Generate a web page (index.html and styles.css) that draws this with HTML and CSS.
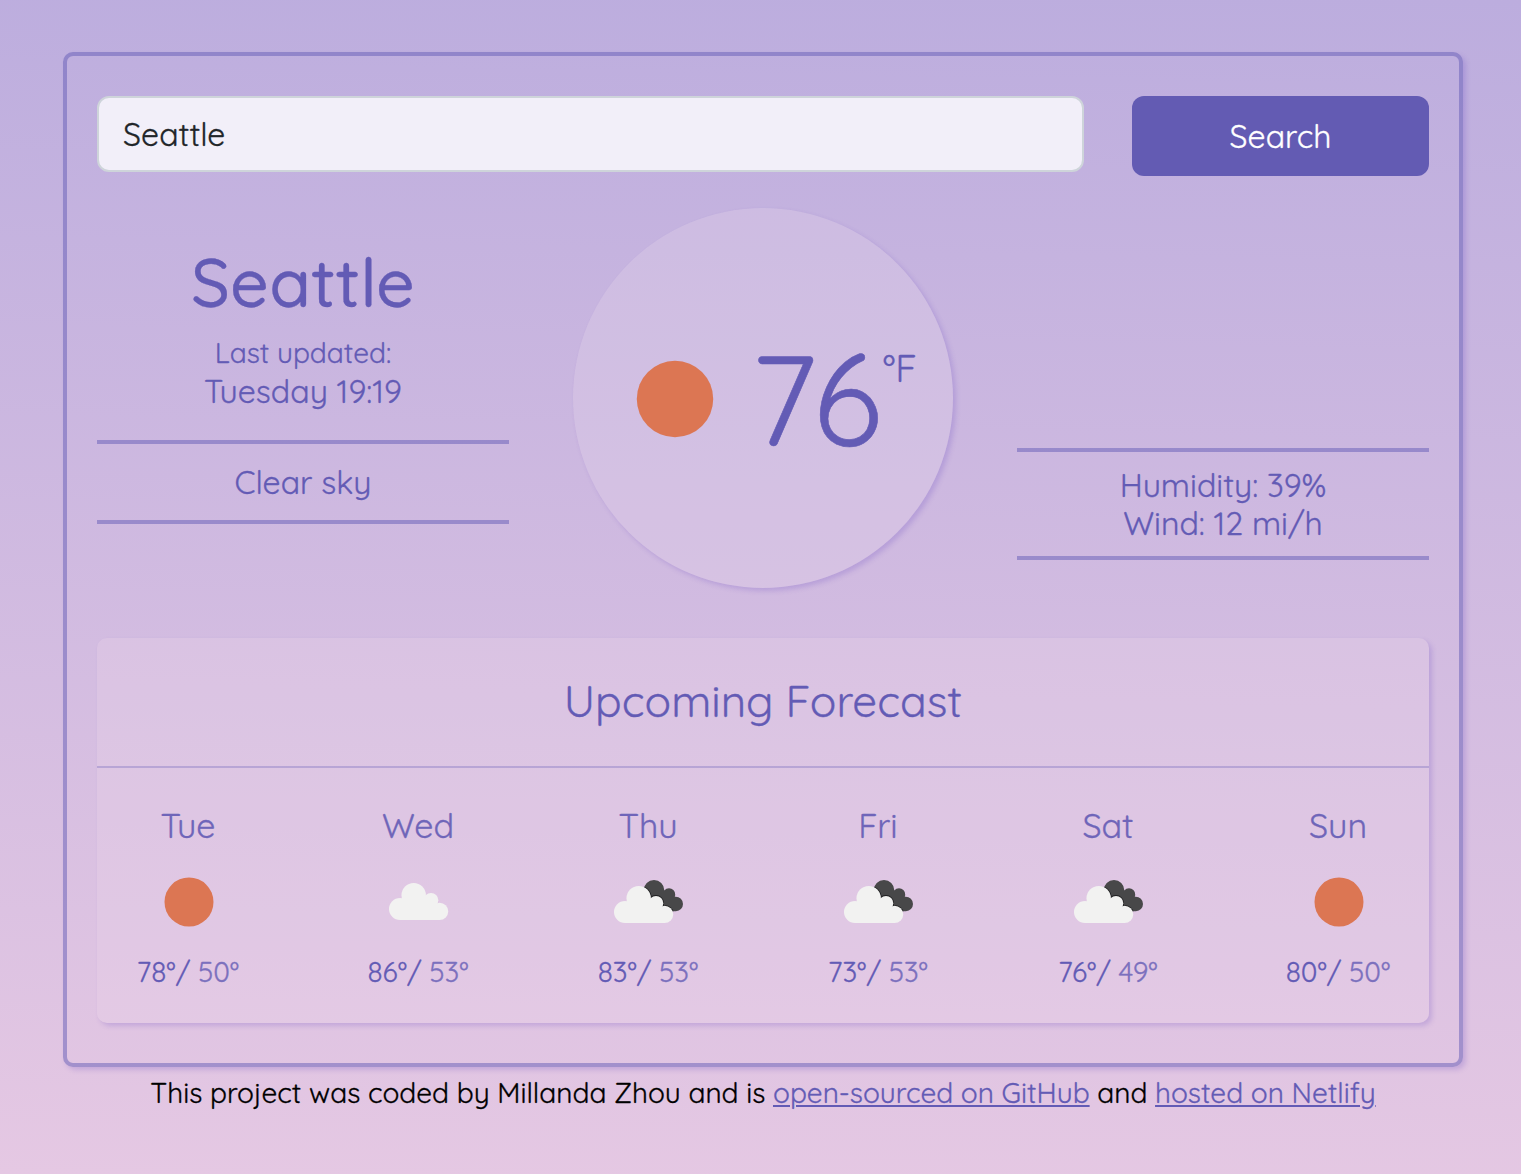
FILE: index.html
```html
<!DOCTYPE html>
<html lang="en">
<head>
<meta charset="utf-8">
<title>Weather</title>
<link rel="stylesheet" href="styles.css">
</head>
<body>
<svg class="defs" aria-hidden="true">
  <defs>
    <g id="cloud-shape">
      <circle cx="11" cy="26" r="11"/><circle cx="24.700" cy="12.200" r="12.200"/><circle cx="42" cy="17.200" r="7.300"/><circle cx="50.600" cy="28.400" r="8.600"/>
      <path d="M11 37L12 20L30 10L42 17L51 28V37Z"/>
    </g>
    <clipPath id="dark-clip">
      <circle cx="40" cy="10.300" r="10.300"/><circle cx="55" cy="14.500" r="6.200"/><circle cx="61.700" cy="24" r="7.300"/>
      <path d="M40 8L55 12L62 24V31.300H40Z"/>
    </clipPath>
  </defs>
  <symbol id="sun" viewBox="0 0 50 50"><circle cx="25" cy="25" r="24.500" fill="#dc7653"/></symbol>
  <symbol id="cloud" viewBox="0 0 60 38"><use href="#cloud-shape" fill="#f2f2f1"/></symbol>
  <symbol id="clouds" viewBox="0 0 70 44">
    <g clip-path="url(#dark-clip)">
      <path fill="#484849" d="M0 0H70V44H0Z"/>
      <use href="#cloud-shape" y="6" fill="#1f1f20" stroke="#1f1f20" stroke-width="1.600"/>
    </g>
    <use href="#cloud-shape" y="6" fill="#f2f2f1"/>
  </symbol>
</svg>
<main class="app">
  <form class="search">
    <input class="search-input" type="text" value="Seattle" aria-label="City">
    <button class="search-button" type="button"><span>Search</span></button>
  </form>
  <section class="current">
    <div class="place">
      <h1 class="city">Seattle</h1>
      <div class="updated"><span>Last updated:</span></div>
      <div class="time"><span>Tuesday 19:19</span></div>
      <div class="sky"><span>Clear sky</span></div>
    </div>
    <div class="dial">
      <svg class="dial-icon"><use href="#sun"/></svg>
      <span class="temp">76</span><span class="unit">°F</span>
    </div>
    <div class="details">
      <div class="humidity"><span>Humidity: 39%</span></div>
      <div class="wind"><span>Wind: 12 mi/h</span></div>
    </div>
  </section>
  <section class="forecast">
    <h2 class="forecast-title"><span>Upcoming Forecast</span></h2>
    <div class="days">
      <div class="day"><div class="name">Tue</div><div class="icon"><svg class="sun"><use href="#sun"/></svg></div><div class="range">78°/ <span class="low">50°</span></div></div>
      <div class="day"><div class="name">Wed</div><div class="icon"><svg class="cloud"><use href="#cloud"/></svg></div><div class="range">86°/ <span class="low">53°</span></div></div>
      <div class="day"><div class="name">Thu</div><div class="icon"><svg class="clouds"><use href="#clouds"/></svg></div><div class="range">83°/ <span class="low">53°</span></div></div>
      <div class="day"><div class="name">Fri</div><div class="icon"><svg class="clouds"><use href="#clouds"/></svg></div><div class="range">73°/ <span class="low">53°</span></div></div>
      <div class="day"><div class="name">Sat</div><div class="icon"><svg class="clouds"><use href="#clouds"/></svg></div><div class="range">76°/ <span class="low">49°</span></div></div>
      <div class="day"><div class="name">Sun</div><div class="icon"><svg class="sun"><use href="#sun"/></svg></div><div class="range">80°/ <span class="low">50°</span></div></div>
    </div>
  </section>
</main>
<footer class="credits">This project was coded by Millanda Zhou and is <a href="#">open-sourced on GitHub</a> and <a href="#">hosted on Netlify</a></footer>
</body>
</html>
```
FILE: styles.css
```css
* { box-sizing: border-box; }
body {
  margin: 0;
  height: 1174px;
  padding: 52px 58px 0 63px;
  font-family: Quicksand, Lato, sans-serif;
  font-size: 32px;
  color: #635bb5;
  -webkit-text-stroke: .3px;
  background: linear-gradient(181deg, #bcadde 0%, #e5c8e3 100%);
  overflow: hidden;
}
.defs { position: absolute; width: 0; height: 0; }
.app {
  width: 1400px;
  height: 1015px;
  padding: 40px 30px;
  border: 4px solid rgba(99, 91, 181, .5);
  border-radius: 10px;
  box-shadow: 3px 3px 5px rgba(99, 70, 190, .22);
}
.search { display: flex; gap: 48px; align-items: flex-start; height: 80px; }
.search-input {
  width: 987px;
  height: 76px;
  padding: 0 24px;
  border: 2px solid #ced4da;
  border-radius: 12px;
  background: #f2eff9;
  font: inherit;
  color: #212529;
  outline: none;
}
.search-button {
  width: 297px;
  height: 80px;
  padding: 0;
  border: 0;
  border-radius: 12px;
  background: #635bb3;
  color: #fff;
  font: inherit;
}
.current {
  display: grid;
  grid-template-columns: 412px 380px 412px;
  justify-content: space-between;
  margin-top: 32px;
  height: 380px;
  text-align: center;
}
.place { padding-top: 32px; }
.city { margin: 0; font-size: 68px; line-height: 84px; font-weight: 500; }
.updated { margin-top: 10px; font-size: 28px; line-height: 38px; }
.time { line-height: 38px; }
.sky {
  margin-top: 30px;
  height: 84px;
  line-height: 76px;
  border: solid rgba(99, 91, 181, .5);
  border-width: 4px 0;
}
.dial {
  display: flex;
  align-items: flex-start;
  padding-left: 63px;
  border-radius: 50%;
  background: rgba(228, 210, 234, .32);
  box-shadow: 3px 3px 5px rgba(99, 70, 190, .22);
}
.dial-icon { flex: none; width: 78px; height: 78px; margin-top: 152px; }
.temp { margin: 112px 0 0 37px; font-size: 128px; line-height: 156px; -webkit-text-stroke: .6px; }
.unit { margin: 137px 0 0 1px; font-size: 38px; line-height: 46px; }
.details {
  margin-top: 240px;
  height: 112px;
  padding-top: 14px;
  line-height: 38px;
  border: solid rgba(99, 91, 181, .5);
  border-width: 4px 0;
}
.forecast {
  height: 385px;
  margin-top: 50px;
  border-radius: 10px;
  background: rgba(236, 216, 235, .28);
  box-shadow: 3px 3px 5px rgba(99, 70, 190, .22);
  text-align: center;
}
.forecast-title {
  height: 130px;
  margin: 0;
  border-bottom: 2px solid rgba(99, 91, 181, .3);
  font-size: 44px;
  font-weight: 400;
  line-height: 126px;
}
.days { display: grid; grid-template-columns: repeat(6, 182px); gap: 48px; padding-top: 37px; }
.name { font-size: 34px; line-height: 42px; opacity: .9; }
.icon { height: 108px; padding: 1px 0 0 1px; display: flex; align-items: center; justify-content: center; }
.icon svg { display: block; }
.sun { width: 50px; height: 50px; }
.cloud { width: 60px; height: 38px; margin: 1px 0 0 1px; }
.clouds { width: 70px; height: 44px; margin-top: 1px; }
.range { font-size: 28px; line-height: 34px; white-space: nowrap; }
.low { opacity: .8; }
.credits { margin-top: 8px; width: 1400px; font-size: 28px; line-height: 36px; text-align: center; color: #000; white-space: nowrap; }
.credits a { color: #635bb5; text-decoration-thickness: 2px; text-underline-offset: 2px; }
```
